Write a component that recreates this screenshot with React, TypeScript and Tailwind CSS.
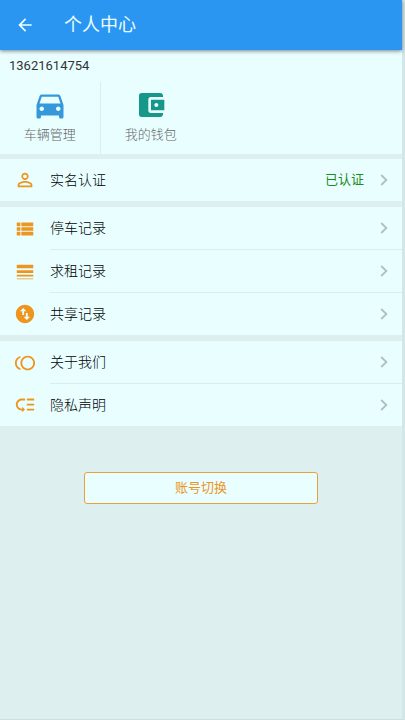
import type { IconType } from 'react-icons';
import {
  MdAccountBalanceWallet,
  MdArrowBack,
  MdDirectionsCar,
  MdLineWeight,
  MdLowPriority,
  MdPersonOutline,
  MdSwapVerticalCircle,
  MdToll,
  MdViewList,
} from 'react-icons/md';

type Item = {
  label: string;
  icon: IconType;
  status?: string;
};

const groups: Item[][] = [
  [{ label: '实名认证', icon: MdPersonOutline, status: '已认证' }],
  [
    { label: '停车记录', icon: MdViewList },
    { label: '求租记录', icon: MdLineWeight },
    { label: '共享记录', icon: MdSwapVerticalCircle },
  ],
  [
    { label: '关于我们', icon: MdToll },
    { label: '隐私声明', icon: MdLowPriority },
  ],
];

function Chevron() {
  return (
    <svg
      viewBox="0 0 8 12"
      className="h-3 w-2 text-[#afbfc6]"
      fill="none"
      stroke="currentColor"
      strokeWidth="1.8"
      aria-hidden="true"
    >
      <path d="M1.2 1 6.4 6l-5.2 5" />
    </svg>
  );
}

function Row({ item, divider }: { item: Item; divider: boolean }) {
  const Icon = item.icon;
  return (
    <li>
      <button type="button" className="flex w-full items-center text-left">
        <span className="flex w-[50px] shrink-0 justify-center">
          <Icon className="size-[22px] text-[#ee951f]" />
        </span>
        <span
          className={`flex flex-1 items-center pr-[14px] ${
            divider ? 'h-[43px] border-b border-[#d9eeee]' : 'h-[42px]'
          }`}
        >
          <span className="flex-1 text-sm font-light text-black">{item.label}</span>
          {item.status ? <span className="mr-4 text-[13px] text-[#1c8c1c]">{item.status}</span> : null}
          <Chevron />
        </span>
      </button>
    </li>
  );
}

export default function App() {
  return (
    <div className="min-h-screen border-r-3 border-b border-r-[#d3e7e8] border-b-[#cddfdf] bg-[#ddf0ef] font-['Roboto','Noto_Sans_CJK_SC',sans-serif]">
      <header className="relative flex h-[50px] items-center bg-[#2b96f1] text-[#eaffff] shadow-[0_1px_4px_rgba(0,0,0,0.5)]">
        <button type="button" aria-label="返回" className="flex w-[50px] justify-center">
          <MdArrowBack className="size-5" />
        </button>
        <h1 className="ml-[14px] text-lg leading-6">个人中心</h1>
      </header>

      <main>
        <section className="mb-[5px] bg-[#e9ffff]">
          <p className="px-[9px] pt-[6px] pb-[6px] text-[13px] leading-5 text-[#333]">13621614754</p>
          <div className="grid grid-cols-4">
            <button
              type="button"
              className="flex h-[72px] flex-col items-center border-r border-[#d9eeee] pt-[5px]"
            >
              <MdDirectionsCar className="size-9 text-[#3498db]" />
              <span className="mt-[2px] text-[13px] leading-5 font-light text-[#666]">车辆管理</span>
            </button>
            <button type="button" className="flex h-[72px] flex-col items-center pt-[7px]">
              <MdAccountBalanceWallet className="size-8 text-[#16978a]" />
              <span className="mt-1 text-[13px] leading-5 font-light text-[#666]">我的钱包</span>
            </button>
          </div>
        </section>

        <div className="space-y-[6px]">
          {groups.map((items) => (
            <ul key={items[0].label} className="bg-[#e9ffff]">
              {items.map((item, i) => (
                <Row key={item.label} item={item} divider={i < items.length - 1} />
              ))}
            </ul>
          ))}
        </div>

        <div className="flex justify-center pt-[46px]">
          <button
            type="button"
            className="h-8 w-7/12 rounded-[3px] border border-[#eda03a] bg-[#e9ffff] text-[13px] leading-5 text-[#ee951f]"
          >
            账号切换
          </button>
        </div>
      </main>
    </div>
  );
}
